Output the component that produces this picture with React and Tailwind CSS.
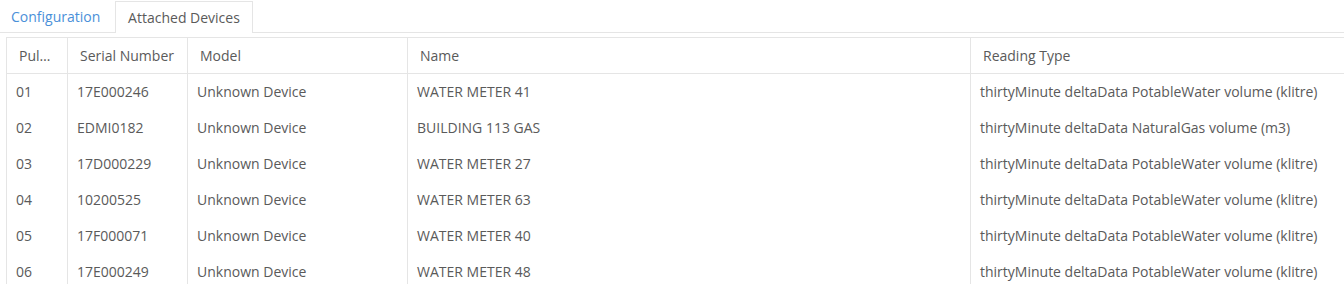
const rows = [
  ["01", "17E000246", "Unknown Device", "WATER METER 41", "thirtyMinute deltaData PotableWater volume (klitre)"],
  ["02", "EDMI0182", "Unknown Device", "BUILDING 113 GAS", "thirtyMinute deltaData NaturalGas volume (m3)"],
  ["03", "17D000229", "Unknown Device", "WATER METER 27", "thirtyMinute deltaData PotableWater volume (klitre)"],
  ["04", "10200525", "Unknown Device", "WATER METER 63", "thirtyMinute deltaData PotableWater volume (klitre)"],
  ["05", "17F000071", "Unknown Device", "WATER METER 40", "thirtyMinute deltaData PotableWater volume (klitre)"],
  ["06", "17E000249", "Unknown Device", "WATER METER 48", "thirtyMinute deltaData PotableWater volume (klitre)"],
];

const cols = [
  { label: "Pulse Input", w: "w-[61px]" },
  { label: "Serial Number", w: "w-[120px]" },
  { label: "Model", w: "w-[220px]" },
  { label: "Name", w: "w-[563px]" },
  { label: "Reading Type", w: "" },
];

export default function App() {
  return (
    <div className="w-[1344px] h-[284px] overflow-hidden bg-white text-[14px] text-[#5a5a5a]" style={{ fontFamily: '"Open Sans", sans-serif' }}>
      {/* tabs */}
      <div className="flex h-[33px] border-b border-[#e5e5e5] pt-[1px]">
        <div className="w-[115px] pl-[11px] flex items-center text-[#4a90d9] cursor-pointer">Configuration</div>
        <div className="w-[138px] h-[32px] -mb-px bg-white border border-b-0 border-[#e5e5e5] flex items-center justify-center">
          Attached Devices
        </div>
      </div>

      <div className="pl-[6px] pt-[4px]">
        <table className="table-fixed w-[1400px] border-collapse">
          <thead>
            <tr className="h-[36px]">
              {cols.map((c) => (
                <th key={c.label} className={`${c.w} border-t border-b border-l border-[#e5e5e5] px-[12px] text-left font-normal truncate`}>
                  {c.label}
                </th>
              ))}
            </tr>
          </thead>
          <tbody>
            {rows.map((r) => (
              <tr key={r[0]} className="h-[36px]">
                {r.map((v, i) => (
                  <td key={i} className="border-l border-[#e5e5e5] px-[9px] whitespace-nowrap overflow-hidden">
                    {v}
                  </td>
                ))}
              </tr>
            ))}
          </tbody>
        </table>
      </div>
    </div>
  );
}
